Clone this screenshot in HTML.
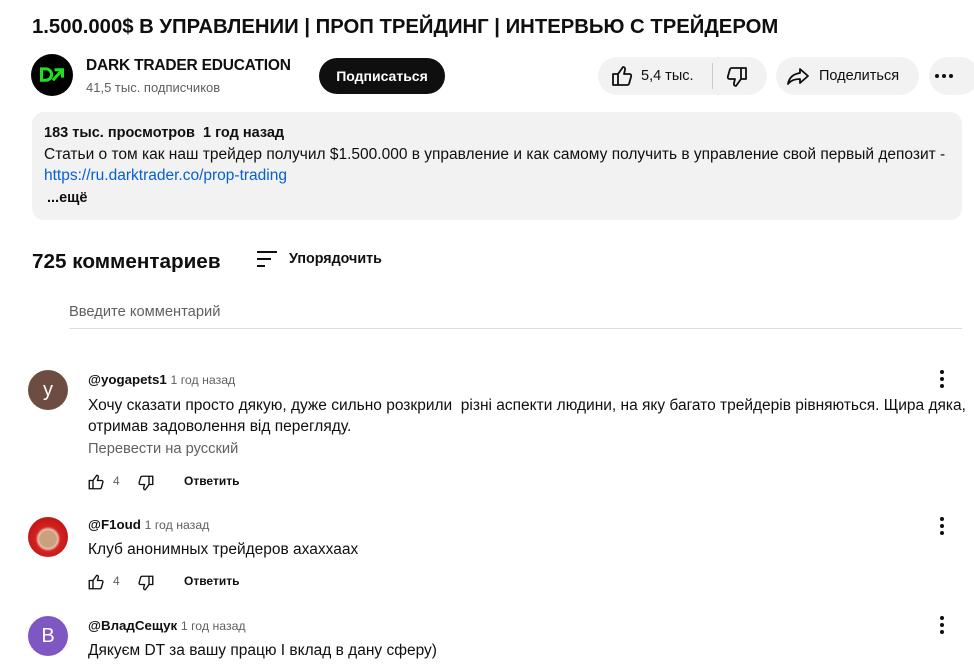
<!DOCTYPE html>
<html><head><meta charset="utf-8"><style>
*{margin:0;padding:0;box-sizing:border-box}
body{width:974px;height:666px;overflow:hidden;background:#fff;font-family:"Liberation Sans",Arial,sans-serif;color:#0f0f0f;position:relative}
.a{position:absolute;white-space:nowrap}
.b{font-weight:bold}
.g{color:#606060}
.pill{position:absolute;background:#f2f2f2;border-radius:19px}
.av{position:absolute;width:40px;height:40px;border-radius:50%;color:#fff;font-size:20px;text-align:center;line-height:40px}
.kb{position:absolute;width:4px}
.kb i{display:block;width:4px;height:4px;border-radius:50%;background:#0f0f0f;margin-bottom:3px}
</style></head><body>
<div class="a b" style="left:32px;top:16px;font-size:20.3px">1.500.000$ В УПРАВЛЕНИИ | ПРОП ТРЕЙДИНГ | ИНТЕРВЬЮ С ТРЕЙДЕРОМ</div>

<div style="position:absolute;left:31px;top:54px;width:42px;height:42px;border-radius:50%;background:#000"></div>
<svg class="a" style="left:38px;top:65px" width="28" height="20" viewBox="0 0 32 22"><path d="M4 4h5a6 6 0 0 1 0 13H4z" fill="none" stroke="#1fe01f" stroke-width="3.5"/><path d="M17 17L27 6M19 5h9v9" fill="none" stroke="#1fe01f" stroke-width="3.5"/></svg>
<div class="a" style="left:86px;top:57px;font-size:15.5px;font-weight:bold;letter-spacing:-0.2px">DARK TRADER EDUCATION</div>
<div class="a g" style="left:86px;top:80px;font-size:13px">41,5 тыс. подписчиков</div>
<div style="position:absolute;left:319px;top:58px;width:126px;height:36px;border-radius:18px;background:#0f0f0f;color:#fff;font-size:14px;font-weight:bold;text-align:center;line-height:36px">Подписаться</div>

<div class="pill" style="left:598px;top:57px;width:169px;height:38px"></div>
<svg class="a" style="left:610px;top:64px" width="24" height="24" viewBox="0 0 24 24"><path d="M8 21V10l5-7c1.5 0 2.5 1 2 3l-1 4h5.5c1.2 0 2 1.1 1.7 2.3l-2 7c-.3.9-1 1.7-2 1.7zM8 10H3v11h5" fill="none" stroke="#0f0f0f" stroke-width="1.8" stroke-linejoin="round"/></svg>
<div class="a" style="left:641px;top:68px;font-size:14.5px;font-weight:500">5,4 тыс.</div>
<div style="position:absolute;left:712px;top:63px;width:1px;height:26px;background:#ccc"></div>
<svg class="a" style="left:725px;top:65px" width="24" height="24" viewBox="0 0 24 24"><path d="M16 3v11l-5 7c-1.5 0-2.5-1-2-3l1-4H4.5c-1.2 0-2-1.1-1.7-2.3l2-7C5.1 3.8 5.8 3 6.8 3zM16 14h5V3h-5" fill="none" stroke="#0f0f0f" stroke-width="1.8" stroke-linejoin="round"/></svg>
<div class="pill" style="left:776px;top:57px;width:143px;height:38px"></div>
<svg class="a" style="left:786px;top:64px" width="24" height="24" viewBox="0 0 24 24"><path d="M14 5l8 7-8 7v-4c-5 0-9 1-12 5 1-6 5-10 12-11z" fill="none" stroke="#0f0f0f" stroke-width="1.8" stroke-linejoin="round"/></svg>
<div class="a" style="left:819px;top:68px;font-size:14.5px;font-weight:500">Поделиться</div>
<div class="pill" style="left:929px;top:57px;width:50px;height:38px"></div>
<div style="position:absolute;left:935px;top:74px;width:4px;height:4px;border-radius:50%;background:#0f0f0f;box-shadow:7px 0 0 #0f0f0f,14px 0 0 #0f0f0f"></div>

<div style="position:absolute;left:32px;top:112px;width:930px;height:108px;border-radius:12px;background:#f2f2f2"></div>
<div class="a b" style="left:44px;top:125px;font-size:14.5px">183 тыс. просмотров&nbsp; 1 год назад</div>
<div class="a" style="left:44px;top:146px;font-size:15.5px">Статьи о том как наш трейдер получил $1.500.000 в управление и как самому получить в управление свой первый депозит -</div>
<div class="a" style="left:44px;top:167px;font-size:15.5px;color:#065fd4">https://ru.darktrader.co/prop-trading</div>
<div class="a b" style="left:47px;top:190px;font-size:14.5px">...ещё</div>

<div class="a b" style="left:32px;top:250px;font-size:20.7px">725 комментариев</div>
<svg class="a" style="left:256px;top:250px" width="22" height="18" viewBox="0 0 22 18"><path d="M1 2h20M1 9h14M1 16h8" stroke="#0f0f0f" stroke-width="2"/></svg>
<div class="a b" style="left:289px;top:251px;font-size:14.3px">Упорядочить</div>

<div class="a g" style="left:69px;top:304px;font-size:14.7px">Введите комментарий</div>
<div style="position:absolute;left:69px;top:328px;width:893px;height:1px;background:#ddd"></div>

<div class="av" style="left:28px;top:370px;background:#6d4c41">y</div>
<div class="a" style="left:88px;top:372px;font-size:13.3px"><b>@yogapets1</b> <span class="g" style="font-size:12.3px">1 год назад</span></div>
<div class="a" style="left:88px;top:395px;font-size:15.5px;line-height:21px">Хочу сказати просто дякую, дуже сильно розкрили&nbsp; різні аспекти людини, на яку багато трейдерів рівняються. Щира дяка,<br>отримав задоволення від перегляду.</div>
<div class="a g" style="left:88px;top:441px;font-size:14.7px">Перевести на русский</div>
<div class="kb" style="left:940px;top:370px"><i></i><i></i><i></i></div>

<svg class="a" style="left:87px;top:473px" width="18" height="18" viewBox="0 0 24 24"><path d="M8 21V10l5-7c1.5 0 2.5 1 2 3l-1 4h5.5c1.2 0 2 1.1 1.7 2.3l-2 7c-.3.9-1 1.7-2 1.7zM8 10H3v11h5" fill="none" stroke="#0f0f0f" stroke-width="1.8"/></svg>
<div class="a g" style="left:113px;top:474px;font-size:12px">4</div>
<svg class="a" style="left:137px;top:474px" width="18" height="18" viewBox="0 0 24 24"><path d="M16 3v11l-5 7c-1.5 0-2.5-1-2-3l1-4H4.5c-1.2 0-2-1.1-1.7-2.3l2-7C5.1 3.8 5.8 3 6.8 3zM16 14h5V3h-5" fill="none" stroke="#0f0f0f" stroke-width="1.8"/></svg>
<div class="a b" style="left:184px;top:474px;font-size:12px">Ответить</div>

<div class="av" style="left:28px;top:517px;background:radial-gradient(circle at 50% 55%,#c9a080 0 28%,#e8c8b0 32%,#d42020 42%,#b01010 100%)"></div>
<div class="a" style="left:88px;top:517px;font-size:13.3px"><b>@F1oud</b> <span class="g" style="font-size:12.3px">1 год назад</span></div>
<div class="a" style="left:88px;top:541px;font-size:15.5px">Клуб анонимных трейдеров ахаххаах</div>
<div class="kb" style="left:940px;top:517px"><i></i><i></i><i></i></div>
<svg class="a" style="left:87px;top:573px" width="18" height="18" viewBox="0 0 24 24"><path d="M8 21V10l5-7c1.5 0 2.5 1 2 3l-1 4h5.5c1.2 0 2 1.1 1.7 2.3l-2 7c-.3.9-1 1.7-2 1.7zM8 10H3v11h5" fill="none" stroke="#0f0f0f" stroke-width="1.8"/></svg>
<div class="a g" style="left:113px;top:574px;font-size:12px">4</div>
<svg class="a" style="left:137px;top:574px" width="18" height="18" viewBox="0 0 24 24"><path d="M16 3v11l-5 7c-1.5 0-2.5-1-2-3l1-4H4.5c-1.2 0-2-1.1-1.7-2.3l2-7C5.1 3.8 5.8 3 6.8 3zM16 14h5V3h-5" fill="none" stroke="#0f0f0f" stroke-width="1.8"/></svg>
<div class="a b" style="left:184px;top:574px;font-size:12px">Ответить</div>

<div class="av" style="left:28px;top:616px;background:#7e57c2">В</div>
<div class="a" style="left:88px;top:618px;font-size:13.3px"><b>@ВладСещук</b> <span class="g" style="font-size:12.3px">1 год назад</span></div>
<div class="a" style="left:88px;top:642px;font-size:15.5px">Дякуєм DT за вашу працю І вклад в дану сферу)</div>
<div class="kb" style="left:940px;top:616px"><i></i><i></i><i></i></div>
</body></html>
